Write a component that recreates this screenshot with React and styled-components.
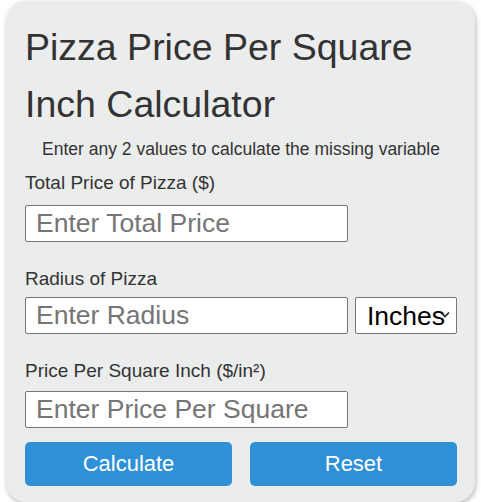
import styled, { createGlobalStyle } from "styled-components";

const GlobalStyle = createGlobalStyle`
  body {
    margin: 0;
    background: #ffffff;
    font-family: "Liberation Sans", Arial, sans-serif;
  }
`;

const Card = styled.div`
  box-sizing: border-box;
  width: 469px;
  margin: 1px 0 0 6px;
  padding: 18px 18px 16px 19px;
  background: #ebecec;
  border-radius: 20px;
  box-shadow: 1px 2px 5px rgba(0, 0, 0, 0.28);
`;

const Title = styled.h1`
  margin: 0;
  font-size: 37.5px;
  font-weight: normal;
  line-height: 57px;
  color: #333333;
`;

const Subtitle = styled.p`
  margin: 6px 0 0;
  font-size: 17.5px;
  line-height: 20px;
  text-align: center;
  color: #333333;
`;

const Label = styled.label`
  display: block;
  margin-top: ${(p) => p.$top}px;
  margin-bottom: ${(p) => p.$bottom}px;
  font-size: 19px;
  line-height: 22px;
  color: #333333;
`;

const Row = styled.div`
  display: flex;
  gap: 7px;
`;

const Input = styled.input`
  box-sizing: border-box;
  width: 323px;
  height: 37px;
  margin: 0;
  padding: 0 0 0 10px;
  border: 1px solid #767676;
  border-radius: 2px;
  background: #ffffff;
  font-family: "Liberation Sans", Arial, sans-serif;
  font-size: 26.5px;
  color: #000000;
  outline: none;

  &::placeholder {
    color: #757575;
  }
`;

const SelectWrap = styled.div`
  position: relative;
  width: 102px;
  height: 37px;
`;

const Select = styled.select`
  box-sizing: border-box;
  width: 100%;
  height: 100%;
  margin: 0;
  padding: 0 0 0 11px;
  border: 1px solid #767676;
  border-radius: 2px;
  background: #ffffff;
  appearance: none;
  font-family: "Liberation Sans", Arial, sans-serif;
  font-size: 26.5px;
  color: #000000;
  outline: none;
`;

const Chevron = styled.svg`
  position: absolute;
  right: 7px;
  top: 14px;
  pointer-events: none;
`;

const Buttons = styled.div`
  display: grid;
  grid-template-columns: 1fr 1fr;
  gap: 18px;
  margin-top: 14px;
`;

const Button = styled.button`
  height: 44px;
  border: none;
  border-radius: 5px;
  background: #2e90d6;
  color: #ffffff;
  font-family: "Liberation Sans", Arial, sans-serif;
  font-size: 22px;
  cursor: pointer;
`;

export default function App() {
  return (
    <>
      <GlobalStyle />
      <Card>
        <Title>Pizza Price Per Square Inch Calculator</Title>
        <Subtitle>Enter any 2 values to calculate the missing variable</Subtitle>

        <Label $top={13} $bottom={11}>Total Price of Pizza ($)</Label>
        <Input placeholder="Enter Total Price" />

        <Label $top={26} $bottom={7}>Radius of Pizza</Label>
        <Row>
          <Input placeholder="Enter Radius" />
          <SelectWrap>
            <Select defaultValue="in">
              <option value="in">Inches</option>
              <option value="cm">Centimeters</option>
            </Select>
            <Chevron width="10" height="7" viewBox="0 0 10 7">
              <path d="M1 1.5 L5 5.5 L9 1.5" fill="none" stroke="#222" strokeWidth="1.6" />
            </Chevron>
          </SelectWrap>
        </Row>

        <Label $top={26} $bottom={9}>Price Per Square Inch ($/in²)</Label>
        <Input placeholder="Enter Price Per Square" />

        <Buttons>
          <Button>Calculate</Button>
          <Button>Reset</Button>
        </Buttons>
      </Card>
    </>
  );
}
